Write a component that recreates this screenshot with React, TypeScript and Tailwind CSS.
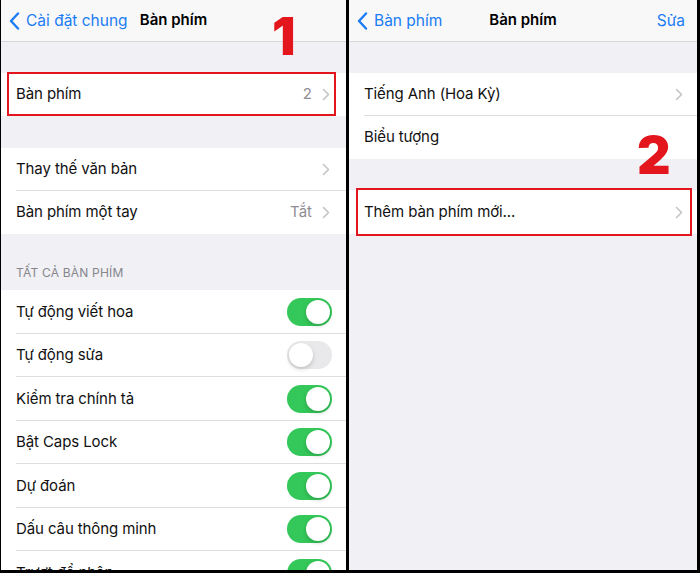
import React from "react";

const FONT = { fontFamily: "Inter, 'Noto Sans', 'Liberation Sans', sans-serif" };

function Chevron() {
  return (
    <svg width="8" height="13" viewBox="0 0 8 13" className="shrink-0">
      <path d="M1.5 1.5 L6.5 6.5 L1.5 11.5" fill="none" stroke="#c4c4c8" strokeWidth="1.6" strokeLinecap="round" strokeLinejoin="round" />
    </svg>
  );
}

function BackChevron() {
  return (
    <svg width="11" height="18" viewBox="0 0 11 18" className="shrink-0">
      <path d="M9 1.5 L2 9 L9 16.5" fill="none" stroke="#1b7cf4" strokeWidth="2.4" strokeLinecap="round" strokeLinejoin="round" />
    </svg>
  );
}

function Toggle({ on }: { on: boolean }) {
  return (
    <div
      className={`w-[45px] h-[28px] rounded-full p-[2px] flex ${on ? "bg-[#34c759] justify-end" : "bg-[#e9e9eb] justify-start"}`}
    >
      <div className="w-[24px] h-[24px] rounded-full bg-white shadow-[0_2px_4px_rgba(0,0,0,0.18)]" />
    </div>
  );
}

function Row({
  label,
  value,
  chevron,
  toggle,
  sep,
  h = "h-[43px]",
  right = "pr-[16px]",
}: {
  label: string;
  value?: string;
  chevron?: boolean;
  toggle?: boolean | null;
  sep?: boolean;
  h?: string;
  right?: string;
}) {
  return (
    <div className={`relative shrink-0 bg-white ${h} flex items-center pl-[15px] ${right}`}>
      <span className="flex-1 text-[15px] text-[#111] tracking-[-0.1px] whitespace-nowrap">{label}</span>
      {value && <span className="text-[15px] text-[#8e8e93] mr-[10px]">{value}</span>}
      {chevron && <Chevron />}
      {toggle !== undefined && toggle !== null && <Toggle on={toggle} />}
      {sep && <div className="absolute bottom-0 left-[15px] right-0 h-px bg-[#dedee0]" />}
    </div>
  );
}

function Nav({ back, title, action }: { back: string; title: string; action?: string }) {
  return (
    <div className="relative shrink-0 h-[42px] bg-[#f8f8f8] border-b border-[#d8d8da] flex items-center pl-[8px] pr-[12px]">
      <div className="flex items-center gap-[6px] text-[#1b7cf4] text-[15.5px] whitespace-nowrap">
        <BackChevron />
        <span>{back}</span>
      </div>
      <div className="absolute inset-0 flex items-center justify-center pointer-events-none">
        <span className="text-[15px] font-semibold text-black">{title}</span>
      </div>
      <div className="flex-1" />
      {action && <span className="text-[#1b7cf4] text-[15.5px]">{action}</span>}
    </div>
  );
}

export default function App() {
  const toggles: [string, boolean][] = [
    ["Tự động viết hoa", true],
    ["Tự động sửa", false],
    ["Kiểm tra chính tả", true],
    ["Bật Caps Lock", true],
    ["Dự đoán", true],
    ["Dấu câu thông minh", true],
    ["Trượt để nhập", true],
  ];
  return (
    <div style={FONT} className="w-[700px] h-[573px] bg-black flex gap-[3px] pl-[1px] pr-[3px] pb-[3px]">
      {/* Left panel */}
      <div className="relative w-[345px] h-full bg-[#f0f0f5] overflow-hidden flex flex-col">
        <Nav back="Cài đặt chung" title="Bàn phím" />
        <div className="h-[31px] shrink-0" />
        <div className="relative shrink-0">
          <Row label="Bàn phím" value="2" chevron />
          <div className="absolute top-[-1px] bottom-0 left-[6px] right-[10px] border-2 border-[#e3151d]" />
        </div>
        <div className="h-[32px] shrink-0" />
        <Row label="Thay thế văn bản" chevron sep />
        <Row label="Bàn phím một tay" value="Tắt" chevron />
        <div className="h-[56px] shrink-0 flex items-end pl-[15px] pb-[8px]">
          <span className="text-[12px] text-[#86868b] tracking-[0.2px]">TẤT CẢ BÀN PHÍM</span>
        </div>
        {toggles.map(([l, on], i) => (
          <Row key={l} label={l} toggle={on} sep={i < toggles.length - 1} h="h-[43.5px]" right="pr-[14px]" />
        ))}
        <div className="absolute left-[271px] top-[11px] text-[52px] font-black text-[#e3151d] leading-none">
          1
        </div>
      </div>

      {/* Right panel */}
      <div className="relative w-[348px] h-full bg-[#f0f0f5] overflow-hidden flex flex-col">
        <Nav back="Bàn phím" title="Bàn phím" action="Sửa" />
        <div className="h-[31px] shrink-0" />
        <Row label="Tiếng Anh (Hoa Kỳ)" chevron sep right="pr-[14px]" />
        <Row label="Biểu tượng" />
        <div className="h-[31px] shrink-0" />
        <div className="relative shrink-0">
          <Row label="Thêm bàn phím mới..." chevron h="h-[44px]" right="pr-[14px]" />
          <div className="absolute top-[-2px] bottom-[-2px] left-[7px] right-[5px] border-2 border-[#e3151d]" />
        </div>
        <div className="absolute left-[288px] top-[130px] text-[52px] font-black text-[#e3151d] leading-none">
          2
        </div>
      </div>
    </div>
  );
}
